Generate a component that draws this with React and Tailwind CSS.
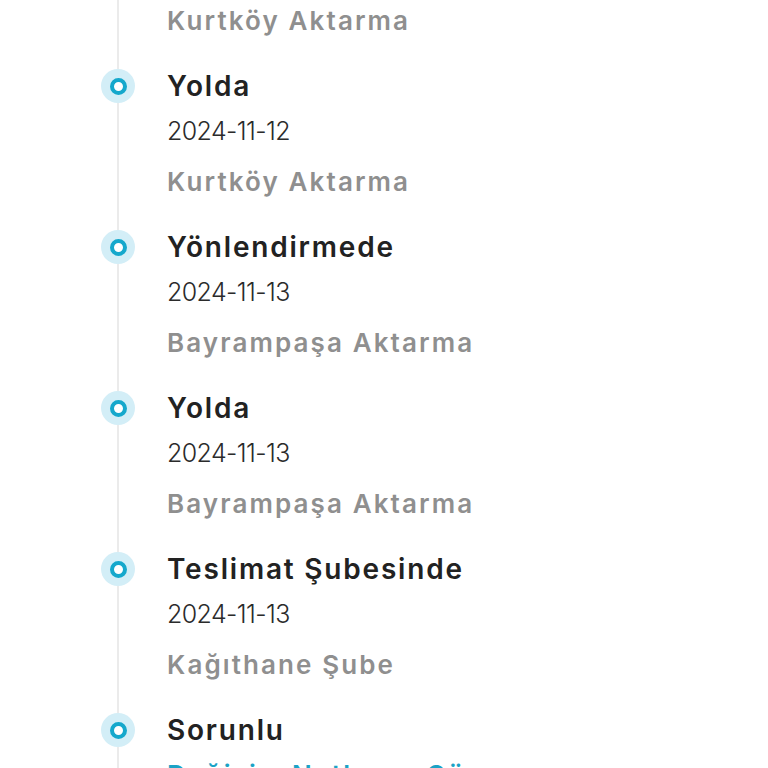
import React from 'react';

const steps = [
  { title: 'Transferde', date: '2024-11-12', place: 'Kurtköy Aktarma' },
  { title: 'Yolda', date: '2024-11-12', place: 'Kurtköy Aktarma' },
  { title: 'Yönlendirmede', date: '2024-11-13', place: 'Bayrampaşa Aktarma' },
  { title: 'Yolda', date: '2024-11-13', place: 'Bayrampaşa Aktarma' },
  { title: 'Teslimat Şubesinde', date: '2024-11-13', place: 'Kağıthane Şube' },
];

const Dot = () => (
  <span className="absolute left-[-18px] top-[1px] flex h-[34px] w-[34px] items-center justify-center rounded-full bg-[#d3eef7]">
    <span className="h-[17px] w-[17px] rounded-full border-[4px] border-[#15a8cc] bg-white" />
  </span>
);

const App = () => {
  return (
    <div className="h-[768px] w-[768px] overflow-hidden bg-white" style={{ fontFamily: 'Inter, "Noto Sans", sans-serif' }}>
      <div className="ml-[117px] mt-[-93px] border-l-2 border-[#ebebeb] pb-20">
        {steps.map((s, i) => (
          <div key={i} className="relative mb-[29px] pl-[48px]">
            <Dot />
            <p className="text-[28px] font-semibold leading-[36px] tracking-[1.8px] text-[#222]">{s.title}</p>
            <p className="mt-[9px] text-[25px] font-light leading-[36px] tracking-[-0.6px] text-[#2b2b2b]">{s.date}</p>
            <p className="mt-[15px] text-[26px] font-semibold leading-[36px] tracking-[2.1px] text-[#8f8f8f]">{s.place}</p>
          </div>
        ))}
        <div className="relative pl-[48px]">
          <Dot />
          <p className="text-[28px] font-semibold leading-[36px] tracking-[1.8px] text-[#222]">Sorunlu</p>
          <p className="mt-[9px] text-[26px] font-semibold leading-[36px] tracking-[2.1px] text-[#1ba3c6]">Değişim Notlarını Gör</p>
        </div>
      </div>
    </div>
  );
};

export default App;
